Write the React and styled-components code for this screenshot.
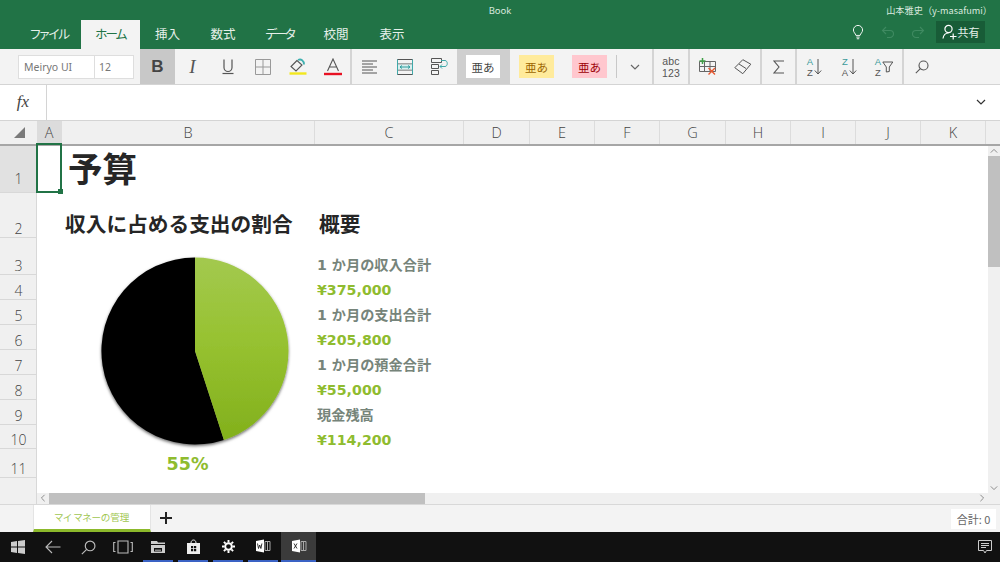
import React from "react";
import styled, { createGlobalStyle } from "styled-components";

const UI = `"Noto Sans CJK JP", "Noto Sans", sans-serif`;
const Global = createGlobalStyle`
  html, body { margin: 0; padding: 0; background: #fff; }
  #root { width: 1000px; height: 562px; overflow: hidden; }
  * { box-sizing: border-box; }
`;

const Page = styled.div`
  width: 1000px; height: 562px; display: flex; flex-direction: column;
  font-family: ${UI}; overflow: hidden; color: #444;
`;

/* title */
const TitleBar = styled.header`height: 49px; background: #217346; display: flex; flex-direction: column; color: #fff;`;
const TitleRow = styled.div`
  height: 20px; display: grid; grid-template-columns: 1fr auto 1fr; align-items: center;
  font-size: 9.5px; color: #d8e8de; font-family: "Noto Sans", ${UI};
`;
const User = styled.span`justify-self: end; font-size: 9.2px; padding-right: 8px; font-family: ${UI};`;
const TabRow = styled.div`height: 29px; display: flex; align-items: stretch; padding-left: 18px;`;
const RibbonTab = styled.div`
  width: ${p => p.$w}px; display: flex; align-items: center; justify-content: center;
  font-size: 12.5px; font-feature-settings: "palt"; padding-bottom: 3px;
  letter-spacing: ${p => p.$ls || 0}px;
  background: ${p => (p.$on ? "#f3f3f3" : "transparent")};
  color: ${p => (p.$on ? "#217346" : "#e6f0ea")};
`;
const TitleTools = styled.div`margin-left: auto; display: flex; align-items: center; padding: 0 15px 5px 0;`;
const ToolIcon = styled.span`width: 30px; height: 24px; display: flex; align-items: center; justify-content: center;`;
const ShareButton = styled.div`
  margin-left: 3px; width: 49px; height: 22px; background: #185c37; display: flex; align-items: center;
  justify-content: center; gap: 1px; font-size: 11px; color: #e6f0ea;
`;

/* ribbon */
const Ribbon = styled.div`
  height: 36px; background: #f3f3f3; border-bottom: 1px solid #d4d4d4; display: flex; align-items: stretch; padding-left: 18px;
`;
const FontBox = styled.div`
  width: 116px; height: 24px; margin: 6px 6px 0 0; background: #fff; border: 1px solid #dedede;
  display: grid; grid-template-columns: 76px 1fr; font-size: 10.5px; color: #777; align-items: center;
`;
const FontName = styled.span`padding-left: 5px; border-right: 1px solid #dedede; line-height: 22px; font-family: "Noto Sans", sans-serif;`;
const FontSize = styled.span`padding-left: 4px; font-family: "Noto Sans", sans-serif;`;
const RBtn = styled.div`
  width: ${p => p.$w || 35}px; display: flex; align-items: center; justify-content: center;
  background: ${p => (p.$on ? "#c8c8c8" : "transparent")}; color: #555;
`;
const Divider = styled.div`width: 2px; background: #d4d4d4;`;
const Bold = styled.span`font-family: "Liberation Sans", sans-serif; font-weight: 700; font-size: 17px; color: #444;`;
const Ital = styled.span`font-family: "Liberation Serif", serif; font-style: italic; font-size: 19px; color: #555;`;
const StyleSelected = styled.div`width: 53px; background: #cfcfcf; display: flex; padding: 6px 10px 6px 9px;`;
const Swatch = styled.div`
  width: 35px; height: 23px; display: flex; align-items: center; justify-content: center;
  font-size: 11.5px; background: ${p => p.$bg}; color: ${p => p.$fg};
`;
const StyleRow = styled.div`width: 106px; display: flex; padding: 6px 0 6px 9px; gap: 18px;`;
const ThinSep = styled.div`width: 1px; height: 23px; background: #c8c8c8; margin: 6px 0 0 0;`;
const AbcText = styled.div`
  width: 34px; display: flex; flex-direction: column; align-items: center; justify-content: center;
  font-family: "Liberation Sans", sans-serif; font-size: 10.5px; line-height: 12px; color: #555; letter-spacing: .2px;
`;
const SortBtn = styled.div`width: 35px; display: flex; align-items: center; justify-content: center; gap: 1px;`;
const SortLetters = styled.div`
  display: flex; flex-direction: column; align-items: center; font-family: "Liberation Sans", sans-serif;
  font-size: 9.5px; line-height: 11px; color: #555;
`;
const Teal = styled.span`color: #3a9a9a;`;

/* formula */
const FormulaBar = styled.div`height: 36px; background: #fff; border-bottom: 1px solid #d4d4d4; display: flex; align-items: center;`;
const FxBox = styled.div`
  width: 47px; height: 100%; border-right: 1px solid #d4d4d4; display: flex; align-items: center; justify-content: center;
  font-family: "Liberation Serif", serif; font-style: italic; font-size: 17px; color: #444;
`;
const FormulaEnd = styled.div`margin-left: auto; padding-right: 14px; display: flex; align-items: center;`;

/* headers */
const ColHeaders = styled.div`
  height: 25px; background: #f0f0f0; border-bottom: 2px solid #a6a6a6; display: flex;
`;
const Corner = styled.div`width: 37px; display: flex; align-items: center; justify-content: center; padding-left: 1px;`;
const ColHead = styled.div`
  width: ${p => p.$w}px; display: flex; align-items: center; justify-content: center;
  border-right: 1px solid #dcdcdc; font-family: "Open Sans", sans-serif; font-weight: 300; font-size: 14.5px; color: #444;
  background: ${p => (p.$on ? "#dcdcdc" : "transparent")};
`;

/* sheet */
const SheetArea = styled.div`height: 358px; display: grid; grid-template-columns: 37px 1fr 12px; grid-template-rows: 347px 11px; background: #fff;`;
const RowHeaders = styled.div`background: #f0f0f0; border-right: 1px solid #d8d8d8; grid-row: 1 / 3; display: flex; flex-direction: column;`;
const RowHead = styled.div`
  height: ${p => p.$h}px; flex: none; border-bottom: 1px solid #d8d8d8; display: flex; align-items: flex-end; justify-content: center;
  font-family: "Open Sans", sans-serif; font-weight: 300; font-size: 14px; line-height: 17px; color: #444; padding-left: 1px;
  padding-bottom: ${p => (p.$on ? 5 : 0)}px;
  background: ${p => (p.$on ? "#e1e1e1" : "transparent")};
`;
const Grid = styled.div`
  display: grid; grid-template-columns: 25px 253px 149px 1fr;
  grid-template-rows: 47px 45px 37px repeat(7, 25px) 24px 29px 1fr; position: relative; color: #262626;
  font-family: "Noto Sans CJK JP", sans-serif;
`;
const Active = styled.div`
  grid-column: 1; grid-row: 1; margin: -3px 0 0 -1px; border: 2px solid #217346; position: relative;
`;
const Handle = styled.span`position: absolute; right: -3px; bottom: -3px; width: 5px; height: 5px; background: #217346;`;
const BigTitle = styled.h1`
  grid-column: 2 / 4; grid-row: 1; margin: 0; font-size: 34.5px; font-weight: 700; line-height: 42px; padding-left: 6px;
  color: #262626;
`;
const SubTitle = styled.h2`
  margin: 0; font-size: 20.7px; font-weight: 700; grid-row: 2; grid-column: ${p => p.$col};
  padding-left: ${p => p.$pad}px; color: #262626; white-space: nowrap; align-self: end; height: 45px; line-height: 60px;
`;
const Label = styled.div`
  grid-column: 3; grid-row: ${p => p.$row}; align-self: end; padding-left: 2px; font-size: 14.2px; font-weight: 700; line-height: 19px;
  color: #76847a; white-space: nowrap; font-family: "DejaVu Sans", "Noto Sans CJK JP", sans-serif;
`;
const Money = styled.div`
  grid-column: 3; grid-row: ${p => p.$row}; align-self: end; padding-left: 2px; font-size: 14.2px; font-weight: 700; line-height: 20px;
  color: #8fbc2f; white-space: nowrap; font-family: "DejaVu Sans", sans-serif;
`;
const PieBox = styled.div`grid-column: 2; grid-row: 3 / 11; padding: 13px 0 0 33px;`;
const Percent = styled.div`
  grid-column: 2; grid-row: 11; text-align: center; font-size: 17.5px; font-weight: 700; color: #8fbc2f;
  font-family: "DejaVu Sans", sans-serif; line-height: 28px; width: 251px;
`;
const VScroll = styled.div`grid-column: 3; grid-row: 1; background: #f0f0f0; display: flex; flex-direction: column; align-items: center;`;
const ScrollArrow = styled.div`height: 10px; flex: none; display: flex; align-items: center; justify-content: center; margin-top: ${p => (p.$end ? "auto" : "0")};`;
const VThumb = styled.div`width: 12px; height: 111px; background: #c0c0c0;`;
const HScroll = styled.div`grid-column: 2; grid-row: 2; background: #f0f0f0; display: flex; align-items: stretch;`;
const HArrow = styled.div`width: 12px; flex: none; display: flex; align-items: center; justify-content: center;`;
const HThumb = styled.div`width: 376px; background: #c0c0c0;`;
const HEnd = styled.div`margin-left: auto; width: 12px; display: flex; align-items: center; justify-content: center;`;
const ScrollCorner = styled.div`grid-column: 3; grid-row: 2; background: #f0f0f0;`;

/* sheet tabs */
const SheetBar = styled.div`height: 29px; background: #f3f3f3; border-top: 1px solid #d8d8d8; display: flex; align-items: stretch; padding-left: 33px;`;
const SheetTab = styled.div`
  width: 118px; background: #fff; border-bottom: 3px solid #8cb92b; border-left: 1px solid #e4e4e4; border-right: 1px solid #e4e4e4;
  color: #a0c650; font-size: 9.6px; display: flex; align-items: center; justify-content: center; font-feature-settings: "palt";
`;
const AddTab = styled.div`width: 30px; display: flex; align-items: center; justify-content: center;`;
const SumBox = styled.div`
  margin: 4px 4px 3px auto; width: 45px; background: #fff; font-size: 11px; color: #666;
  display: flex; align-items: center; justify-content: center; white-space: nowrap;
`;

/* taskbar */
const Taskbar = styled.footer`height: 30px; background: #111; display: flex; align-items: stretch;`;
const TaskNav = styled.div`width: 35.25px; display: flex; align-items: center; justify-content: center; flex: none;`;
const TaskApps = styled.div`display: flex; gap: 5px; padding-left: 2px;`;
const TaskApp = styled.div`
  width: ${p => p.$w || 30}px; flex: none; display: flex; align-items: center; justify-content: center;
  border-bottom: 2px solid #3a62c4;
  background: ${p => (p.$on ? "#3b3b3b" : "transparent")};
  margin-left: ${p => (p.$on ? -2 : 0)}px;
`;
const TaskEnd = styled.div`margin-left: auto; width: 30px; display: flex; align-items: center; justify-content: center;`;

const Ico = ({ w = 24, h = 24, vb, children }) => (
  <svg width={w} height={h} viewBox={vb || `0 0 ${w} ${h}`} fill="none">{children}</svg>
);

const Chevron = ({ c = "#666", w = 10, dir = "down" }) => {
  const d = { down: "M1 3l4 4 4-4", up: "M1 7l4-4 4 4", left: "M7 1L3 5l4 4", right: "M3 1l4 4-4 4" }[dir];
  return <Ico w={w} h={w} vb="0 0 10 10"><path d={d} stroke={c} strokeWidth="1.2" /></Ico>;
};

const Bulb = () => (
  <Ico w={12} h={15} vb="0 0 14 18"><path d="M4.500 12.500C4 10 1.500 9 1.500 6a5.500 5.500 0 0 1 11 0c0 3-2.500 4-3 6.500zM5 14.500h4M5.500 16.500h3" stroke="#f0f5f2" strokeWidth="1.200" /></Ico>
);
const Undo = ({ flip }) => (
  <Ico w={14} h={14}><g transform={flip ? "translate(14,0) scale(-1,1)" : undefined}><path d="M5 2L1.500 5.500 5 9M1.500 5.500H9a3.500 3.500 0 0 1 0 7H6" stroke="#3f8a61" strokeWidth="1.100" /></g></Ico>
);
const Person = () => (
  <Ico w={15} h={16}><circle cx="6.500" cy="5" r="3.600" stroke="#fff" strokeWidth="1.200" /><path d="M1 14.500c.5-3.500 2.500-5.500 5.500-5.500M8 12.500h6.500M11.200 9.500v6" stroke="#fff" strokeWidth="1.200" /></Ico>
);
const Underline = () => (
  <Ico w={14} h={17}><path d="M3 1.500v8a4 4 0 0 0 8 0v-8" stroke="#555" strokeWidth="1.200" /><path d="M1.500 15.500h11" stroke="#555" strokeWidth="1.200" /></Ico>
);
const Borders = () => (
  <Ico w={16} h={16}><path d="M.5.5h15v15H.5zM8 .5v15M.5 8h15" stroke="#999" /></Ico>
);
const FillColor = () => (
  <Ico w={18} h={18}>
    <path d="M8 2.500L2 8.500l5 4.500 6-6z" stroke="#555" strokeWidth="1.100" />
    <path d="M9 2c3-1.500 6 .5 6 4.500" stroke="#3fb0b0" strokeWidth="1.800" />
    <path d="M.5 15.500h17" stroke="#f2e71e" strokeWidth="2.400" />
  </Ico>
);
const FontColor = () => (
  <Ico w={18} h={18}>
    <path d="M3.500 13L9 1l5.500 12M5.200 9h7.600" stroke="#555" strokeWidth="1.100" />
    <path d="M0 16h18" stroke="#e81123" strokeWidth="2.400" />
  </Ico>
);
const Align = () => (
  <Ico w={16} h={14}><path d="M0 1h15M0 4h11M0 7h15M0 10h11M0 13h15" stroke="#555" /></Ico>
);
const Wrap = () => (
  <Ico w={16} h={16}>
    <path d="M.5.5h15v15H.5zM.5 5h15M.5 11h15" stroke="#555" />
    <path d="M1 5.500h14v5H1z" fill="#d9efef" />
    <path d="M3 8h10M3 8l2-1.500M3 8l2 1.500M13 8l-2-1.500M13 8l-2 1.500" stroke="#2f9c9c" />
    <path d="M.5.5v15M15.500.5v15" stroke="#3fa9a9" />
  </Ico>
);
const Merge = () => (
  <Ico w={18} h={17}>
    <path d="M.5.5h10v4H.5zM.5 6.500h7v4H.5zM.5 12.500h7v4H.5z" stroke="#555" />
    <path d="M10 2.500h4c3 0 3 6 0 6H9M11 6.500L9 8.500l2 2" stroke="#3fa9a9" />
  </Ico>
);
const TableEdit = () => (
  <Ico w={18} h={17}>
    <path d="M.5 3.500h16v10H.5zM5.500 3.500v10M11 3.500v10M.5 8.500h16" stroke="#666" />
    <path d="M.5 3h6M3.500 0v6" stroke="#3f9f46" strokeWidth="1.500" />
    <path d="M9.500 10l6.500 6.500M16 10l-6.500 6.500" stroke="#e8562e" strokeWidth="1.400" />
  </Ico>
);
const Eraser = () => (
  <Ico w={18} h={16}>
    <path d="M.8 9l8-8 8 4.500-8 9.500z" transform="translate(0 -.3)" stroke="#555" />
    <path d="M5 5l7 4.500" stroke="#555" />
  </Ico>
);
const Sigma = () => (
  <Ico w={12} h={14}><path d="M11 1H1l5 6-5 6h10" stroke="#555" strokeWidth="1.100" /></Ico>
);
const DownArrow = () => (
  <Ico w={8} h={18}><path d="M4 1v15M.8 12.500L4 16l3.200-3.500" stroke="#555" /></Ico>
);
const Funnel = () => (
  <Ico w={12} h={12}><path d="M.8 1h10L7.300 6v4.500L4.300 11V6z" stroke="#555" /></Ico>
);
const SearchIco = ({ c = "#555", s = 14 }) => (
  <Ico w={s} h={s} vb="0 0 14 14"><circle cx="8.500" cy="5.500" r="4.500" stroke={c} strokeWidth="1.100" /><path d="M5.300 8.700L.8 13.200" stroke={c} strokeWidth="1.100" /></Ico>
);
const Triangle = () => <Ico w={11} h={11}><path d="M11 0v11H0z" fill="#7a7a7a" /></Ico>;
const Plus = () => <Ico w={12} h={12}><path d="M6 0v12M0 6h12" stroke="#222" strokeWidth="2" /></Ico>;

const Pie = () => (
  <svg width="200" height="200" viewBox="0 0 200 200">
    <defs>
      <linearGradient id="pieGreen" x1="0" y1="0" x2="0" y2="1">
        <stop offset="0" stopColor="#a3c94f" />
        <stop offset=".45" stopColor="#97c231" />
        <stop offset="1" stopColor="#82b01c" />
      </linearGradient>
      <filter id="pieShadow" x="-10%" y="-10%" width="120%" height="120%">
        <feDropShadow dx="0" dy="1.500" stdDeviation="1.600" floodColor="#000" floodOpacity=".6" />
      </filter>
    </defs>
    <g filter="url(#pieShadow)">
      <path d="M100 100L128.900 188.900A93.500 93.500 0 1 1 100 6.500z" fill="#000" />
      <path d="M100 100V6.500A93.500 93.500 0 0 1 128.900 188.900z" fill="url(#pieGreen)" />
    </g>
  </svg>
);

const WinLogo = () => (
  <Ico w={14} h={14}><path d="M0 2l6-.9v5.500H0zM7 1l7-1v6.600H7zM0 7.500h6v5.500L0 12zM7 7.500h7V14l-7-1z" fill="#ccc" /></Ico>
);
const Back = () => <Ico w={16} h={14}><path d="M15.500 7H1M7 1L1 7l6 6" stroke="#bbb" strokeWidth="1.100" /></Ico>;
const TaskView = () => (
  <Ico w={20} h={14}><path d="M5 1h10v12H5zM2.500 2.500H.7v9h1.800M17.500 2.500h1.800v9h-1.800" stroke="#bbb" strokeWidth="1.100" /></Ico>
);
const Explorer = () => (
  <Ico w={14} h={13}><path d="M0 1h6l1 1.500h7V4H0z" fill="#ccc" /><path d="M0 5h14v8H0z" fill="#ccc" /><path d="M3 8h8v3.500H3z" fill="#111" /><path d="M4 9.500h6V11H4z" fill="#888" /></Ico>
);
const Store = () => (
  <Ico w={13} h={15}><path d="M0 4h13v11H0z" fill="#eee" /><path d="M4 4c0-4 5-4 5 0" stroke="#eee" /><path d="M4 7h2.200v2.200H4zM7 7h2.200v2.200H7zM4 10h2.200v2.200H4zM7 10h2.200v2.200H7z" fill="#111" /></Ico>
);
const Gear = () => (
  <Ico w={13} h={13} vb="0 0 15 15"><circle cx="7.500" cy="7.500" r="3.800" stroke="#fff" strokeWidth="2.200" /><path d="M7.500 0v3M7.500 12v3M0 7.500h3M12 7.500h3M2.200 2.200l2 2M10.800 10.800l2 2M2.200 12.800l2-2M10.800 4.200l2-2" stroke="#fff" strokeWidth="2.200" /></Ico>
);
const Office = ({ letter }) => (
  <Ico w={16} h={14}>
    <path d="M1 2l8-1.500v13L1 12z" fill="#fff" />
    <path d="M10 2.500h5v9h-5z" stroke="#aaa" /><path d="M12.500 2.500v9" stroke="#aaa" />
    {letter === "W"
      ? <path d="M2.500 4.500l1 5 1.200-3.500 1.200 3.500 1-5" stroke="#222" strokeWidth=".9" />
      : <path d="M3 4.500l3 5M6 4.500l-3 5" stroke="#222" strokeWidth=".9" />}
  </Ico>
);
const Notify = () => (
  <Ico w={14} h={14}><path d="M.5 .5h13v10H8.500L7 13 5.500 10.500h-5z" stroke="#ccc" /><path d="M3 3.500h8M3 5.500h8M3 7.500h5" stroke="#ccc" /></Ico>
);

const tabs = [["ファイル", 63, false, -1.2], ["ホーム", 59, true, -1.8], ["挿入", 55], ["数式", 56], ["データ", 57, false, -2.2], ["校閲", 56], ["表示", 56]];
const cols = [["A", 25, true], ["B", 253], ["C", 149], ["D", 66], ["E", 65], ["F", 65], ["G", 66], ["H", 65], ["I", 65], ["J", 65], ["K", 65]];
const rows = [[1, 47, true], [2, 45], [3, 37], [4, 25], [5, 25], [6, 25], [7, 25], [8, 25], [9, 25], [10, 24], [11, 29]];
const summary = [
  ["1 か月の収入合計", "¥375,000"],
  ["1 か月の支出合計", "¥205,800"],
  ["1 か月の預金合計", "¥55,000"],
  ["現金残高", "¥114,200"],
];

export default function App() {
  return (
    <Page>
      <Global />
      <TitleBar>
        <TitleRow><span /><span>Book</span><User>山本雅史（y-masafumi）</User></TitleRow>
        <TabRow>
          {tabs.map(([t, w, on, ls]) => <RibbonTab key={t} $w={w} $on={on} $ls={ls}>{t}</RibbonTab>)}
          <TitleTools>
            <ToolIcon><Bulb /></ToolIcon>
            <ToolIcon><Undo /></ToolIcon>
            <ToolIcon><Undo flip /></ToolIcon>
            <ShareButton><Person />共有</ShareButton>
          </TitleTools>
        </TabRow>
      </TitleBar>

      <Ribbon>
        <FontBox><FontName>Meiryo UI</FontName><FontSize>12</FontSize></FontBox>
        <RBtn $on><Bold>B</Bold></RBtn>
        <RBtn><Ital>I</Ital></RBtn>
        <RBtn><Underline /></RBtn>
        <RBtn><Borders /></RBtn>
        <RBtn><FillColor /></RBtn>
        <RBtn><FontColor /></RBtn>
        <Divider />
        <RBtn><Align /></RBtn>
        <RBtn><Wrap /></RBtn>
        <RBtn><Merge /></RBtn>
        <StyleSelected><Swatch $bg="#fff" $fg="#444">亜あ</Swatch></StyleSelected>
        <StyleRow>
          <Swatch $bg="#ffeb9c" $fg="#9c6500">亜あ</Swatch>
          <Swatch $bg="#ffc7ce" $fg="#9c0006">亜あ</Swatch>
        </StyleRow>
        <ThinSep />
        <RBtn><Chevron c="#666" /></RBtn>
        <Divider />
        <AbcText><span>abc</span><span>123</span></AbcText>
        <Divider />
        <RBtn><TableEdit /></RBtn>
        <RBtn><Eraser /></RBtn>
        <Divider />
        <RBtn $w={33}><Sigma /></RBtn>
        <Divider />
        <SortBtn><SortLetters><Teal>A</Teal><span>Z</span></SortLetters><DownArrow /></SortBtn>
        <SortBtn><SortLetters><Teal>Z</Teal><span>A</span></SortLetters><DownArrow /></SortBtn>
        <SortBtn><SortLetters><Teal>A</Teal><span>Z</span></SortLetters><Funnel /></SortBtn>
        <Divider />
        <RBtn><SearchIco /></RBtn>
      </Ribbon>

      <FormulaBar>
        <FxBox>fx</FxBox>
        <FormulaEnd><Chevron c="#333" /></FormulaEnd>
      </FormulaBar>

      <ColHeaders>
        <Corner><Triangle /></Corner>
        {cols.map(([c, w, on]) => <ColHead key={c} $w={w} $on={on}>{c}</ColHead>)}
      </ColHeaders>

      <SheetArea>
        <RowHeaders>
          {rows.map(([n, h, on]) => <RowHead key={n} $h={h} $on={on}>{n}</RowHead>)}
        </RowHeaders>
        <Grid>
          <Active><Handle /></Active>
          <BigTitle>予算</BigTitle>
          <SubTitle $col="1 / 3" $pad={28}>収入に占める支出の割合</SubTitle>
          <SubTitle $col="3" $pad={4}>概要</SubTitle>
          <PieBox><Pie /></PieBox>
          {summary.map(([l, m], i) => (
            <React.Fragment key={l}>
              <Label $row={3 + i * 2}>{l}</Label>
              <Money $row={4 + i * 2}>{m}</Money>
            </React.Fragment>
          ))}
          <Percent>55%</Percent>
        </Grid>
        <VScroll>
          <ScrollArrow><Chevron c="#888" w={8} dir="up" /></ScrollArrow>
          <VThumb />
          <ScrollArrow $end><Chevron c="#888" w={8} /></ScrollArrow>
        </VScroll>
        <HScroll>
          <HArrow><Chevron c="#888" w={8} dir="left" /></HArrow>
          <HThumb />
          <HEnd><Chevron c="#888" w={8} dir="right" /></HEnd>
        </HScroll>
        <ScrollCorner />
      </SheetArea>

      <SheetBar>
        <SheetTab>マイ マネーの管理</SheetTab>
        <AddTab><Plus /></AddTab>
        <SumBox>合計: 0</SumBox>
      </SheetBar>

      <Taskbar>
        <TaskNav><WinLogo /></TaskNav>
        <TaskNav><Back /></TaskNav>
        <TaskNav><SearchIco c="#bbb" s={15} /></TaskNav>
        <TaskNav><TaskView /></TaskNav>
        <TaskApps>
          <TaskApp><Explorer /></TaskApp>
          <TaskApp><Store /></TaskApp>
          <TaskApp><Gear /></TaskApp>
          <TaskApp><Office letter="W" /></TaskApp>
          <TaskApp $w={35} $on><Office letter="X" /></TaskApp>
        </TaskApps>
        <TaskEnd><Notify /></TaskEnd>
      </Taskbar>
    </Page>
  );
}
